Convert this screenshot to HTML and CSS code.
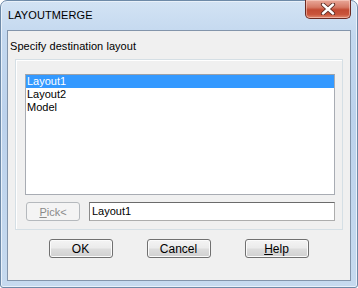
FILE: index.html
```html
<!DOCTYPE html>
<html>
<head>
<meta charset="utf-8">
<link rel="stylesheet" href="styles.css">
</head>
<body>
<div class="window">
  <div class="titlebar">
    <span class="title">LAYOUTMERGE</span>
    <div class="close">
      <svg width="16" height="12" viewBox="0 0 16 12">
        <path d="M3 1.5 L13 10.5 M13 1.5 L3 10.5" stroke="#5a2a22" stroke-width="4.2" stroke-linecap="round"/>
        <path d="M3 1.5 L13 10.5 M13 1.5 L3 10.5" stroke="#ffffff" stroke-width="2.4" stroke-linecap="round"/>
      </svg>
    </div>
  </div>
  <div class="client">
    <div class="prompt">Specify destination layout</div>
    <div class="group">
      <div class="listbox">
        <div class="item selected">Layout1</div>
        <div class="item">Layout2</div>
        <div class="item">Model</div>
      </div>
      <div class="pickrow">
        <div class="btn disabled"><u>P</u>ick&lt;</div>
        <div class="textbox">Layout1</div>
      </div>
    </div>
    <div class="buttons">
      <div class="btn main">OK</div>
      <div class="btn main">Cancel</div>
      <div class="btn main"><u>H</u>elp</div>
    </div>
  </div>
</div>
</body>
</html>
```

FILE: styles.css
```css
html, body {
  margin: 0;
  padding: 0;
  background: #ffffff;
}
body {
  width: 358px;
  height: 288px;
  overflow: hidden;
  font-family: "Liberation Sans", Arial, sans-serif;
  font-size: 11px;
  color: #000;
}
.window {
  box-sizing: border-box;
  width: 358px;
  height: 288px;
  border: 1px solid #6e8aa8;
  border-radius: 7px 7px 3px 3px;
  background: linear-gradient(180deg, #d3e3f4 0%, #c3d8ef 12%, #bcd2ec 40%, #c6daef 100%);
  box-shadow: inset 0 0 0 1px #e9f1fa;
  padding: 0 6px 6px 6px;
  display: flex;
  flex-direction: column;
}
.titlebar {
  height: 29px;
  display: flex;
  justify-content: space-between;
  align-items: flex-start;
  flex: none;
}
.title {
  margin-top: 8px;
  margin-left: 1px;
  font-size: 11px;
  color: #000;
  letter-spacing: 0.1px;
}
.close {
  width: 44px;
  height: 18px;
  margin-top: -1px;
  margin-right: 0px;
  border: 1px solid #6b2a22;
  border-top: none;
  border-radius: 0 0 5px 5px;
  background: linear-gradient(180deg, #e9a99a 0%, #d67a66 40%, #c24a32 55%, #c9543a 80%, #e08a70 100%);
  box-shadow: inset 0 0 0 1px rgba(255,220,210,0.5);
  display: flex;
  align-items: center;
  justify-content: center;
}
.client {
  flex: 1;
  background: #f0f0f0;
  border: 1px solid #8395ab;
  display: flex;
  flex-direction: column;
}
.prompt {
  margin: 8px 0 0 2px;
  height: 14px;
  line-height: 14px;
  letter-spacing: 0.05px;
}
.group {
  margin: 6px 7px 0 7px;
  border: 1px solid #d5dfe5;
  box-shadow: inset 1px 1px 0 #ffffff;
  padding: 14px 7px 8px 9px;
}
.listbox {
  height: 119px;
  background: #ffffff;
  border: 1px solid #a8acb3;
  border-top-color: #9ca1a8;
}
.item {
  height: 13px;
  line-height: 13px;
  padding-left: 1px;
}
.item.selected {
  background: #3399ff;
  color: #ffffff;
}
.pickrow {
  margin-top: 7px;
  display: flex;
  gap: 9px;
  height: 19px;
}
.btn {
  box-sizing: border-box;
  height: 19px;
  display: flex;
  align-items: center;
  justify-content: center;
  border: 1px solid #707070;
  border-radius: 3px;
  background: linear-gradient(180deg, #f4f4f4 0%, #ebebeb 48%, #dddddd 52%, #d0d0d0 100%);
  box-shadow: inset 0 0 0 1px #fbfbfb;
}
.btn.disabled {
  width: 54px;
  margin-left: 1px;
  border-color: #b5b9bd;
  background: #f4f4f4;
  color: #8a8a8a;
  box-shadow: none;
}
.textbox {
  box-sizing: border-box;
  flex: 1;
  height: 19px;
  background: #ffffff;
  border: 1px solid #7a7a7a;
  border-color: #6b6b6b #adadad #adadad #8a8a8a;
  padding-left: 2px;
  line-height: 17px;
}
.buttons {
  margin-top: 9px;
  display: flex;
  justify-content: center;
  gap: 34px;
  padding-right: 1px;
}
.btn.main {
  width: 64px;
  font-size: 12px;
}
u {
  text-decoration: underline;
  text-underline-offset: 1px;
}
```
